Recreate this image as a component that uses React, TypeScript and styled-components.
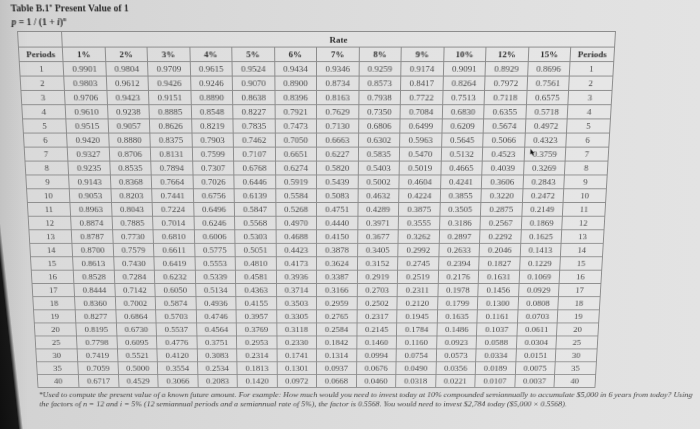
import React from "react";
import styled, { createGlobalStyle } from "styled-components";

const GlobalStyle = createGlobalStyle`
  html, body { margin: 0; padding: 0; width: 700px; height: 429px; overflow: hidden; }
  body { background: #d9d9d9; }
  #root { width: 700px; height: 429px; }
`;

const Scene = styled.div`
  position: relative;
  width: 700px;
  height: 429px;
  overflow: hidden;
  background:
    linear-gradient(83.7deg, #0e0e0e 0%, #171717 2.5%, rgba(30, 30, 30, 0) 3.1%),
    linear-gradient(90deg, rgba(0, 0, 0, 0.07) 0%, rgba(0, 0, 0, 0) 4%),
    linear-gradient(90deg, #d2d2d2 0%, #d9d9d9 35%, #e0e0e0 75%, #e3e3e3 100%);
  font-family: "Liberation Serif", "Times New Roman", serif;
`;

const Page = styled.div`
  width: 700px;
  height: 470px;
  box-sizing: border-box;
  padding: 2px 0 0 12px;
  transform-origin: 316px 31px;
  transform: perspective(1122px) rotateX(-12.2deg);
`;

const Title = styled.div`
  font-weight: bold;
  font-size: 9.6px;
  line-height: 12px;
  color: #2a2a2a;
  sup {
    font-size: 6px;
    vertical-align: 3px;
    line-height: 0;
  }
`;

const Formula = styled.div`
  margin-top: 1px;
  font-weight: bold;
  font-size: 9.6px;
  line-height: 13px;
  color: #2a2a2a;
  i {
    font-style: italic;
  }
  sup {
    font-size: 6px;
    vertical-align: 4px;
    line-height: 0;
  }
`;

const Table = styled.table`
  border-collapse: collapse;
  table-layout: fixed;
  width: 598px;
  margin: 3px 0 0 5px;
  border: 1px solid #7a7a7a;
  background: rgba(255, 255, 255, 0.16);
`;

const Col = styled.col<{ $w: number }>`
  width: ${(p) => p.$w}px;
`;

const Row = styled.tr<{ $h: number }>`
  height: ${(p) => p.$h}px;
`;

const Cell = styled.td<{ $head?: boolean }>`
  position: relative;
  border: 1px solid #8c8c8c;
  padding: 0;
  font-size: 9px;
  line-height: 12px;
  text-align: center;
  white-space: nowrap;
  color: ${(p) => (p.$head ? "#2e2e2e" : "#4a4a4a")};
  font-weight: ${(p) => (p.$head ? "bold" : "normal")};
`;

const Pointer = styled.svg`
  position: absolute;
  left: 5px;
  top: 1px;
  width: 5px;
  height: 8px;
`;

const Footnote = styled.p`
  margin: 3px 0 0 6px;
  font-style: italic;
  font-size: 8.5px;
  line-height: 10.7px;
  color: #444444;
  white-space: nowrap;
`;

const rates = [0.01, 0.02, 0.03, 0.04, 0.05, 0.06, 0.07, 0.08, 0.09, 0.1, 0.12, 0.15];
const periods = [1, 2, 3, 4, 5, 6, 7, 8, 9, 10, 11, 12, 13, 14, 15, 16, 17, 18, 19, 20, 25, 30, 35, 40];

const pv = (r: number, n: number) => (1 / Math.pow(1 + r, n)).toFixed(4);

export default function App() {
  return (
    <>
      <GlobalStyle />
      <Scene>
        <Page>
          <Title>
            Table B.1<sup>*</sup> Present Value of 1
          </Title>
          <Formula>
            <i>p</i> = 1 / (1 + <i>i</i>)<sup>
              <i>n</i>
            </sup>
          </Formula>
          <Table>
            <colgroup>
              <Col $w={44} />
              {rates.map((r) => (
                <Col key={r} $w={42.5} />
              ))}
              <Col $w={44} />
            </colgroup>
            <tbody>
              <Row $h={16}>
                <Cell $head />
                <Cell $head colSpan={13}>
                  Rate
                </Cell>
              </Row>
              <Row $h={15}>
                <Cell $head>Periods</Cell>
                {rates.map((r) => (
                  <Cell $head key={r}>
                    {Math.round(r * 100)}%
                  </Cell>
                ))}
                <Cell $head>Periods</Cell>
              </Row>
              {periods.map((n) => (
                <Row $h={15} key={n}>
                  <Cell>{n}</Cell>
                  {rates.map((r) => (
                    <Cell key={r}>
                      {n === 7 && r === 0.15 && (
                        <Pointer viewBox="0 0 5 8">
                          <path d="M0.5 0.5 L0.5 6.5 L1.8 5.2 L3 7.6 L3.9 7.2 L2.8 4.9 L4.6 4.9 Z" fill="#111" />
                        </Pointer>
                      )}
                      {pv(r, n)}
                    </Cell>
                  ))}
                  <Cell>{n}</Cell>
                </Row>
              ))}
            </tbody>
          </Table>
          <Footnote>
            *Used to compute the present value of a known future amount. For example: How much would you need to invest today at 10% compounded semiannually to accumulate $5,000 in 6 years from today? Using
            <br />
            the factors of <i>n</i> = 12 and <i>i</i> = 5% (12 semiannual periods and a semiannual rate of 5%), the factor is 0.5568. You would need to invest $2,784 today ($5,000 × 0.5568).
          </Footnote>
        </Page>
      </Scene>
    </>
  );
}
